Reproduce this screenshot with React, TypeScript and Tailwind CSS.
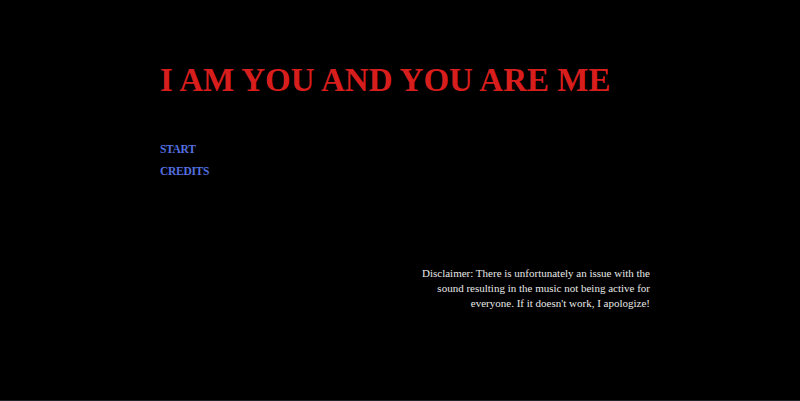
export default function App() {
  return (
    <div className="h-[401px] w-full bg-black overflow-hidden border-b border-[#22232b] font-['Liberation_Serif',serif]">
      <div className="ml-[160px] w-[490px] pt-[62px]">
        <h1 className="text-[33px] font-bold leading-[36px] text-[#d81d1d] whitespace-nowrap">
          I AM YOU AND YOU ARE ME
        </h1>
        <nav className="mt-[44px] flex flex-col gap-[8px]">
          <a className="text-[11.5px] font-bold leading-[14px] tracking-[-0.3px] text-[#5470e0] cursor-pointer">START</a>
          <a className="text-[11.5px] font-bold leading-[14px] tracking-[-0.3px] text-[#5470e0] cursor-pointer">CREDITS</a>
        </nav>
        <p className="mt-[88px] ml-auto w-[240px] text-right text-[11px] leading-[15px] text-[#e8e8e8]">
          Disclaimer: There is unfortunately an issue with the sound resulting in the music not being active for everyone. If it doesn't work, I apologize!
        </p>
      </div>
    </div>
  );
}
